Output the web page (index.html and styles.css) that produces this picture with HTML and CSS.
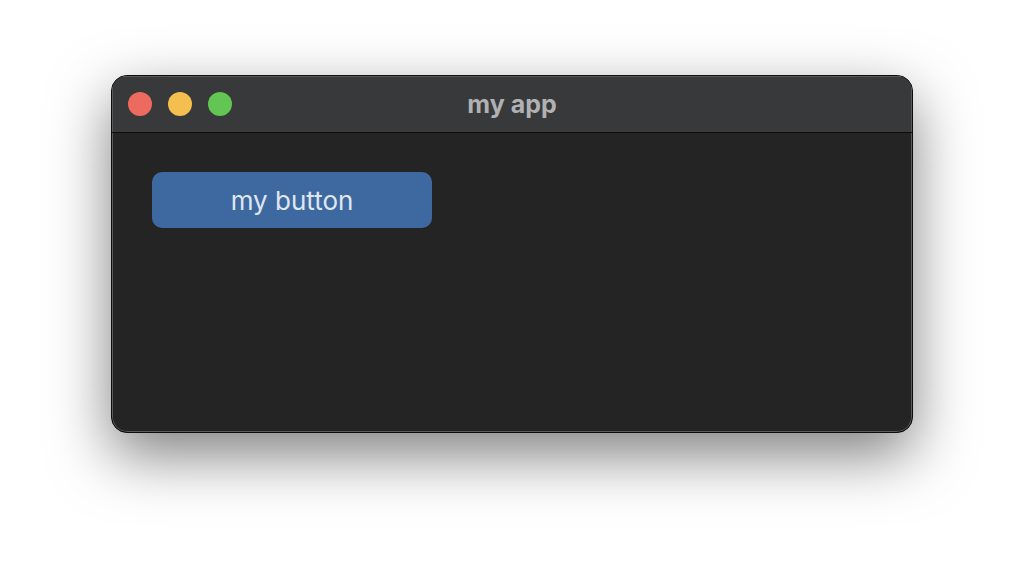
FILE: index.html
```html
<!DOCTYPE html>
<html lang="en">
<head>
    <meta charset="UTF-8">
    <meta name="viewport" content="width=device-width, initial-scale=1.0">
    <title>my app</title>
    <link rel="stylesheet" href="styles.css">
</head>
<body>
    <div class="window">
        <div class="titlebar">
            <div class="lights">
                <span class="light close"></span>
                <span class="light minimize"></span>
                <span class="light zoom"></span>
            </div>
            <div class="title">my app</div>
        </div>
        <div class="content">
            <button class="btn" type="button">my button</button>
        </div>
    </div>
</body>
</html>
```

FILE: styles.css
```css
html, body {
    margin: 0;
    height: 100%;
}
body {
    background: #ffffff;
    font-family: Inter, "Liberation Sans", sans-serif;
    display: flex;
    justify-content: center;
    align-items: flex-start;
    padding-top: 75px;
    box-sizing: border-box;
}
.window {
    width: 802px;
    height: 358px;
    box-sizing: border-box;
    border: 1px solid #0c0c0c;
    border-radius: 16px;
    background: #242424;
    box-shadow: inset 0 0 0 1px #5a5a5c, 0 22px 60px rgba(0, 0, 0, 0.5);
    overflow: hidden;
    display: flex;
    flex-direction: column;
}
.titlebar {
    height: 56px;
    flex: none;
    background: #38393b;
    border-bottom: 1px solid #0e0e0e;
    display: flex;
    align-items: center;
    position: relative;
    box-shadow: inset 0 1px 0 #5a5a5c, inset 1px 0 0 #5a5a5c, inset -1px 0 0 #5a5a5c;
}
.lights {
    display: flex;
    gap: 16px;
    padding-left: 16px;
}
.light {
    width: 24px;
    height: 24px;
    border-radius: 50%;
}
.close { background: #ec6a5e; }
.minimize { background: #f4bf4f; }
.zoom { background: #62c554; }
.title {
    position: absolute;
    left: 0;
    right: 0;
    text-align: center;
    font-family: Inter, "Liberation Sans", sans-serif;
    font-size: 25px;
    font-weight: 700;
    color: #b1b1b3;
    pointer-events: none;
}
.content {
    flex: 1;
    padding: 39px 40px;
}
.btn {
    width: 280px;
    height: 56px;
    border: none;
    border-radius: 10px;
    background: #3e69a0;
    color: #dfe6f1;
    font-family: Inter, "Liberation Sans", sans-serif;
    font-size: 26px;
    padding: 0;
}
```
